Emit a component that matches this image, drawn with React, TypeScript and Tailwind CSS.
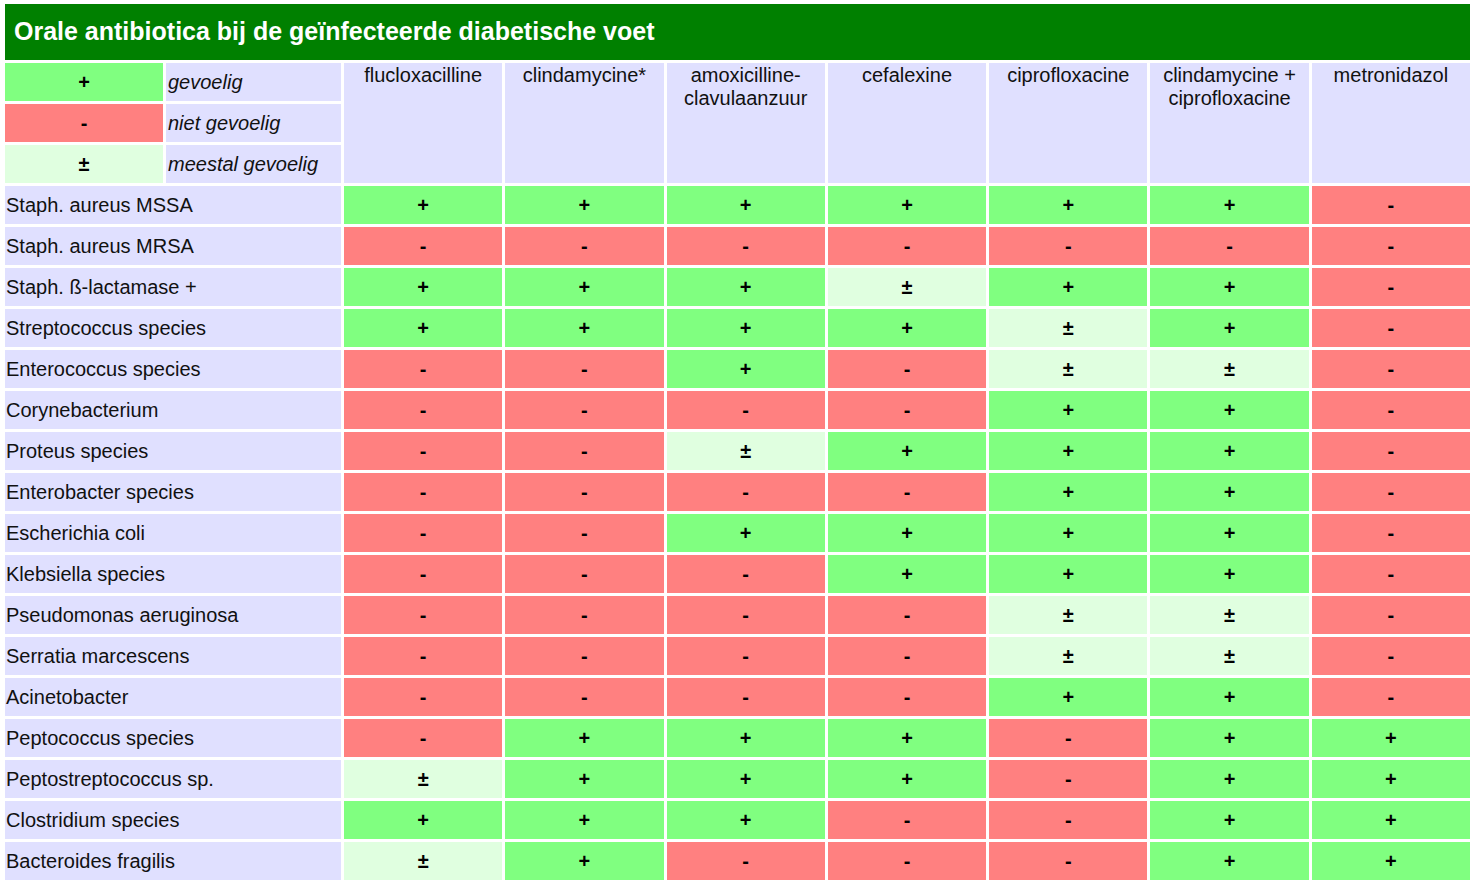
import React from "react";

const antibiotics = [
  ["flucloxacilline"],
  ["clindamycine*"],
  ["amoxicilline-", "clavulaanzuur"],
  ["cefalexine"],
  ["ciprofloxacine"],
  ["clindamycine +", "ciprofloxacine"],
  ["metronidazol"],
];

const rows: [string, string][] = [
  ["Staph. aureus MSSA", "++++++-"],
  ["Staph. aureus MRSA", "-------"],
  ["Staph. ß-lactamase +", "+++±++-"],
  ["Streptococcus species", "++++±+-"],
  ["Enterococcus species", "--+-±±-"],
  ["Corynebacterium", "----++-"],
  ["Proteus species", "--±+++-"],
  ["Enterobacter species", "----++-"],
  ["Escherichia coli", "--++++-"],
  ["Klebsiella species", "---+++-"],
  ["Pseudomonas aeruginosa", "----±±-"],
  ["Serratia marcescens", "----±±-"],
  ["Acinetobacter", "----++-"],
  ["Peptococcus species", "-+++-++"],
  ["Peptostreptococcus sp.", "±+++-++"],
  ["Clostridium species", "+++--++"],
  ["Bacteroides fragilis", "±+---++"],
];

function cellBg(v: string) {
  if (v === "+") return "bg-[#80ff80]";
  if (v === "-") return "bg-[#ff8080]";
  return "bg-[#e0ffe0]";
}

export default function App() {
  return (
    <div
      className="w-[1475px] h-[882px] bg-white pt-[4px] px-[5px] overflow-hidden"
      style={{ fontFamily: '"Liberation Sans", Arial, sans-serif' }}
    >
      <div className="h-[56px] bg-[#008000] text-white font-bold text-[25px] flex items-center pl-[9px]">
        Orale antibiotica bij de geïnfecteerde diabetische voet
      </div>
      <div className="mt-[3px] grid grid-cols-[158px_175px_repeat(7,1fr)] auto-rows-[38px] gap-[3px] text-[20px] text-[#111]">
        <div className="bg-[#80ff80] flex items-center justify-center font-bold text-[20px] text-black">+</div>
        <div className="bg-[#e0e0ff] flex items-center italic pl-[2px]">gevoelig</div>
        {antibiotics.map((a, i) => (
          <div
            key={i}
            className="row-span-3 bg-[#e0e0ff] text-center leading-[23px] pt-[1px]"
          >
            {a.map((l, j) => (
              <div key={j}>{l}</div>
            ))}
          </div>
        ))}
        <div className="bg-[#ff8080] flex items-center justify-center font-bold text-[20px] text-black">-</div>
        <div className="bg-[#e0e0ff] flex items-center italic pl-[2px]">niet gevoelig</div>
        <div className="bg-[#e0ffe0] flex items-center justify-center font-bold text-[20px] text-black">±</div>
        <div className="bg-[#e0e0ff] flex items-center italic pl-[2px]">meestal gevoelig</div>

        {rows.map(([label, vals], r) => (
          <React.Fragment key={r}>
            <div className="col-span-2 bg-[#e0e0ff] flex items-center pl-[1px]">{label}</div>
            {vals.split("").map((v, c) => (
              <div
                key={c}
                className={`${cellBg(v)} flex items-center justify-center font-bold text-[20px] text-black`}
              >
                {v}
              </div>
            ))}
          </React.Fragment>
        ))}
      </div>
    </div>
  );
}
